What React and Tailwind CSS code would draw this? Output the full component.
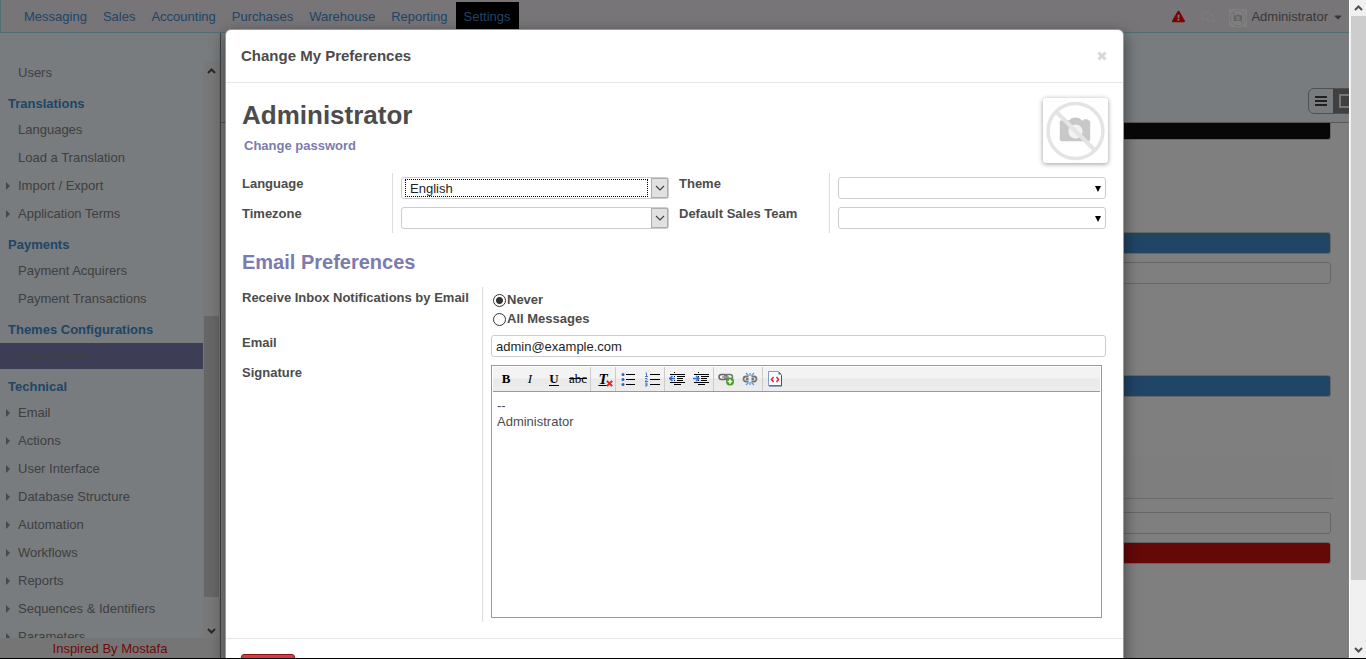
import React from "react";
import { FaExclamationTriangle, FaRegComments, FaCaretDown } from "react-icons/fa";

const navItems = ["Messaging", "Sales", "Accounting", "Purchases", "Warehouse", "Reporting", "Settings"];

const sections = [
  { title: null, items: [["Users", false]] },
  {
    title: "Translations",
    items: [["Languages", false], ["Load a Translation", false], ["Import / Export", true], ["Application Terms", true]],
  },
  { title: "Payments", items: [["Payment Acquirers", false], ["Payment Transactions", false]] },
  { title: "Themes Configurations", items: [["User Theme", false]] },
  {
    title: "Technical",
    items: [
      ["Email", true],
      ["Actions", true],
      ["User Interface", true],
      ["Database Structure", true],
      ["Automation", true],
      ["Workflows", true],
      ["Reports", true],
      ["Sequences & Identifiers", true],
      ["Parameters", true],
    ],
  },
];

function Arrow({ down }) {
  return (
    <svg viewBox="0 0 9 6" className="h-[6px] w-[9px] shrink-0">
      <path d={down ? "M1 1 L4.5 4.5 L8 1" : "M1 5 L4.5 1.5 L8 5"} fill="none" stroke="#505050" strokeWidth="2" />
    </svg>
  );
}

function NoPhoto({ className }) {
  return (
    <svg viewBox="0 0 64 64" className={className}>
      <circle cx="32" cy="32.500" r="27" fill="none" stroke="#e4e4e4" strokeWidth="3.500" />
      <path d="M19 22 h7 l2-2 q4-1.500 8 0 l2 2 h2 v-1 h4 v1 h1 q1.500 0 1.500 1.500 v17 q0 2-2 2 h-26 q-2 0-2-2 v-17 q0-1.500 2-1.500z" fill="#c8c8c8" />
      <circle cx="32" cy="33" r="7" fill="#f2f2f2" />
      <path d="M13.500 14 L51 51.500" stroke="#e4e4e4" strokeWidth="4" />
    </svg>
  );
}

function TopBar() {
  return (
    <header className="flex h-[33px] shrink-0 items-start justify-between border-b border-l border-[#a5dde6] bg-[#f0eaf2] pt-[2px] text-[13px]">
      <nav className="flex pl-[15px]">
        {navItems.map((n) => (
          <a key={n} href="#" className={`flex h-[27px] items-center px-2 pb-px pt-[3px] text-[#428bca] ${n === "Settings" ? "bg-black" : ""}`}>
            {n}
          </a>
        ))}
      </nav>
      <div className="flex h-[29px] items-center pr-[5px] text-[#707070]">
        <FaExclamationTriangle className="mr-4 size-[13px] text-[#ff0000]" />
        <FaRegComments className="mr-[14px] size-[14px] text-white opacity-60" />
        <span className="mr-[4px] mt-[2px] block size-[18px] bg-white">
          <NoPhoto className="size-[18px]" />
        </span>
        <a href="#" className="flex items-center gap-1">
          Administrator
          <FaCaretDown className="size-3" />
        </a>
      </div>
    </header>
  );
}

function Sidebar() {
  return (
    <aside className="flex w-[221px] shrink-0 flex-col border-r border-[#808080] bg-[#f0f8ff] text-[13px]">
      <div className="h-7 shrink-0" />
      <div className="flex min-h-0 flex-1">
        <div className="min-w-0 flex-1 overflow-hidden">
          <div className="-mt-[2px]">
            {sections.map((s) => (
              <section key={s.title ?? "top"}>
                {s.title && <h4 className="h-7 pl-2 pt-1 font-bold leading-6 text-[#428bca]">{s.title}</h4>}
                <ul>
                  {s.items.map(([label, more]) => (
                    <li key={label} className={`my-[2px] flex h-[26px] items-center first:mt-px ${label === "User Theme" ? "bg-[#7c7bad]" : ""}`}>
                      <span className="flex w-[18px] shrink-0 pl-[6px]">
                        {more && (
                          <svg viewBox="0 0 4 8" className="h-2 w-1">
                            <path d="M0 0 L4 4 L0 8z" fill="#909090" />
                          </svg>
                        )}
                      </span>
                      <a href="#" className="text-[#808080]">{label}</a>
                    </li>
                  ))}
                </ul>
              </section>
            ))}
          </div>
        </div>
        <div className="flex w-[17px] shrink-0 flex-col items-center bg-[#f0f0f0] pb-1 pt-[7px]">
          <Arrow />
          <div className="mt-[242px] w-[15px] flex-1 bg-[#cdcdcd]" />
          <div className="h-[31px]" />
          <Arrow down />
        </div>
      </div>
      <footer className="h-5 shrink-0 bg-[#ebebeb] text-center leading-[22px] text-[#dc1414]">Inspired By Mostafa</footer>
    </aside>
  );
}

function Content() {
  return (
    <main className="min-w-0 flex-1 bg-white">
      <div className="flex h-[90px] items-end justify-end overflow-hidden border-b border-[#b0b0b0] bg-[#f0f8ff] pb-2">
        <div className="-mr-[9px] flex h-[26px] overflow-hidden rounded-l-[6px] border border-[#a0a0a0]">
          <button aria-label="List view" className="flex w-6 items-center justify-center">
            <svg viewBox="0 0 12 10" className="h-[10px] w-3">
              <path d="M0 1h12M0 5h12M0 9h12" stroke="#404040" strokeWidth="2" />
            </svg>
          </button>
          <button aria-label="Form view" className="flex w-6 items-center justify-center border-l border-[#808080] bg-[#808080]">
            <svg viewBox="0 0 14 14" className="size-[14px]">
              <path d="M1 1h12v12H1z" fill="none" stroke="#f0f0f0" strokeWidth="2" />
            </svg>
          </button>
        </div>
      </div>
      <div className="mr-[18px] pl-4">
        <div className="h-[17px] rounded-b-[3px] border border-t-0 border-[#ccc] bg-[#0e0e0e]" />
        <div className="mt-[92px] h-[22px] rounded-[3px] border border-[#ccc] bg-[#428bca]" />
        <input aria-label="Header color" className="mt-2 block h-[22px] w-full rounded-[3px] border border-[#ccc]" />
        <div className="mt-[91px] h-[22px] rounded-[3px] border border-[#ccc] bg-[#428bca]" />
        <div className="-mr-[2px] mt-[59px] h-[43px] border-b border-[#d6d6d6] bg-[#fdfdfd]" />
        <input aria-label="Button color" className="mt-[13px] block h-[22px] w-full rounded-[3px] border border-[#ccc]" />
        <div className="mt-2 h-[22px] rounded-[3px] border border-[#ccc] bg-[#c81010]" />
      </div>
    </main>
  );
}

function NativeSelect({ id, value, focused }) {
  return (
    <div className="relative h-[22px]">
      <select id={id} className="block h-full w-full appearance-none rounded-[3px] border border-[#ccc] bg-white pl-2 pr-6 pt-px text-[13px] font-normal leading-[20px] text-[#1e1e1e] outline-none">
        <option>{value}</option>
      </select>
      {focused && <span className="pointer-events-none absolute bottom-[2px] left-1 right-[21px] top-[2px] border border-dotted border-black" />}
      <span className="pointer-events-none absolute bottom-px right-px top-px flex w-[17px] items-center justify-center border border-[#adadad] bg-[#e1e1e1]">
        <svg viewBox="0 0 10 6" className="h-[6px] w-[10px]">
          <path d="M1 1 L5 5 L9 1" fill="none" stroke="#404040" strokeWidth="1.100" />
        </svg>
      </span>
    </div>
  );
}

function ComboSelect({ id }) {
  return (
    <div className="relative h-[22px]">
      <select id={id} className="block h-full w-full appearance-none rounded-[3px] border border-[#ccc] bg-white text-[13px] font-normal outline-none">
        <option />
      </select>
      <svg viewBox="0 0 6 6" className="pointer-events-none absolute right-[5px] top-[9px] size-[6px]">
        <path d="M0 0h6L3 6z" fill="#000" />
      </svg>
    </div>
  );
}

function FieldPair({ rows }) {
  return (
    <div className="flex flex-1">
      <div className="flex w-[151px] shrink-0 flex-col border-r border-[#ddd]">
        {rows.map(([id, label]) => (
          <label key={id} htmlFor={id} className="h-[30px] pt-[2px] leading-[18px]">
            {label}
          </label>
        ))}
      </div>
      <div className="flex flex-1 flex-col gap-2 pl-2 pt-1">
        {rows.map(([id, , control]) => (
          <React.Fragment key={id}>{control}</React.Fragment>
        ))}
      </div>
    </div>
  );
}

function Tool({ label, sep, children }) {
  return (
    <button
      aria-label={label}
      className={`flex h-6 shrink-0 items-center justify-center font-['Liberation_Serif',serif] text-[13px] font-normal leading-[16px] text-black ${sep ? "w-[25px] border-r border-[#ccc]" : "w-6"}`}
    >
      {children}
    </button>
  );
}

function Icon({ children }) {
  return (
    <svg viewBox="0 0 16 16" className="size-4 shrink-0" fill="none">
      {children}
    </svg>
  );
}

function IndentIcon({ flip }) {
  return (
    <Icon>
      <path d="M1 3.500h4M6 3.500h10M8 5.500h8M8 7.500h6M8 9.500h6M1 11.500h4M6 11.500h10M6 13.500h6" stroke="#000" />
      <path d="M5.500 1v14" stroke="#000" strokeDasharray="1 1" />
      <path d={flip ? "M0 7.500h5M3 5l3 2.500L3 10" : "M6 7.500H1M3.500 5L0.500 7.500l3 2.500"} stroke="#2b6fd0" strokeWidth="1.500" />
    </Icon>
  );
}

function Toolbar() {
  return (
    <div className="m-px mb-0 flex h-[25px] border-b border-[#999] bg-[linear-gradient(to_bottom,#f3f3f3_45%,#e9e9e9_50%,#ededed)] pl-px">
      <Tool label="Bold"><b>B</b></Tool>
      <Tool label="Italic"><i>I</i></Tool>
      <Tool label="Underline"><span className="border-b border-black font-bold leading-[12px]">U</span></Tool>
      <Tool label="Strikethrough" sep><s>abc</s></Tool>
      <Tool label="Remove formatting" sep>
        <span className="relative text-[15px] font-bold italic underline">
          T
          <svg viewBox="0 0 8 8" className="absolute -right-[5px] bottom-0 size-[7px]">
            <path d="M1 1l6 6M7 1L1 7" stroke="#f02020" strokeWidth="2.400" />
          </svg>
        </span>
      </Tool>
      <Tool label="Bullets">
        <Icon>
          <path d="M6 3.500h9M6 8.500h9M6 13.500h9" stroke="#000" />
          <g fill="#2f62b8">
            <circle cx="3" cy="3.500" r="1.500" />
            <circle cx="3" cy="8.500" r="1.500" />
            <circle cx="3" cy="13.500" r="1.500" />
          </g>
        </Icon>
      </Tool>
      <Tool label="Numbering" sep>
        <Icon>
          <path d="M6 3.500h10M6 8.500h10M6 13.500h10" stroke="#000" />
          <path d="M1.500 2h1v3M1 5.500h3M1 7.500h2v1l-1.500 1.500M1 10.500h3M1 12h2v1.500H1.500M3 13.500v1.500H1" stroke="#4a78c0" />
        </Icon>
      </Tool>
      <Tool label="Outdent"><IndentIcon /></Tool>
      <Tool label="Indent" sep><IndentIcon flip /></Tool>
      <Tool label="Insert hyperlink">
        <Icon>
          <rect x="1" y="3.500" width="8" height="5" rx="2.500" stroke="#666" strokeWidth="1.500" />
          <rect x="6.500" y="3.500" width="8" height="5" rx="2.500" stroke="#777" strokeWidth="1.500" />
          <path d="M4 6h7" stroke="#999" strokeWidth="1.500" />
          <circle cx="12" cy="10.500" r="4" fill="#4c9a2a" />
          <path d="M12 8.200v4.600M9.700 10.500h4.600" stroke="#fff" strokeWidth="1.500" />
        </Icon>
      </Tool>
      <Tool label="Remove hyperlink" sep>
        <Icon>
          <path d="M6.500 5.500H4a2.500 2.500 0 0 0 0 5h2.500M9.500 5.500H12a2.500 2.500 0 0 1 0 5H9.500M4 8h2.500M9.500 8H12" stroke="#777" strokeWidth="1.800" />
          <path d="M8 2v3M4 2l2.500 2.500M12 2L9.500 4.500M8 14v-3M4 14l2.500-2.500M12 14l-2.500-2.500" stroke="#5b9be6" strokeWidth="1.300" />
        </Icon>
      </Tool>
      <Tool label="Show source">
        <Icon>
          <path d="M1.500 0.500h10l3 3v11h-13z" fill="#f8fbff" stroke="#7f9cc8" />
          <path d="M14.500 4.500v10.500H2" stroke="#2f5590" />
          <path d="M11.500 0.500v3h3z" fill="#3d66a5" />
          <path d="M6.500 6L4.500 8.500l2 2.500M9.500 6l2 2.500-2 2.500" stroke="#f02020" strokeWidth="1.500" />
        </Icon>
      </Tool>
    </div>
  );
}

function Preferences() {
  return (
    <div role="dialog" aria-label="Change My Preferences" className="mt-[29px] w-full max-w-[899px] self-start rounded-[6px] border border-[#999] bg-white text-[13px] font-bold text-[#4c4c4c] shadow-[0_5px_15px_rgba(0,0,0,0.5)]">
      <div className="flex h-[53px] items-center justify-between border-b border-[#e5e5e5] pl-[15px] pr-[15px]">
        <h3 className="text-[15px] leading-5">Change My Preferences</h3>
        <button aria-label="Close" className="flex size-3 items-center justify-center">
          <svg viewBox="0 0 10 10" className="size-[10px]">
            <path d="M1.500 1.500l7 7M8.500 1.500l-7 7" stroke="#d8d8d8" strokeWidth="3" />
          </svg>
        </button>
      </div>
      <div className="pb-4 pl-4 pr-[15px] pt-[15px]">
        <div className="flex items-start justify-between">
          <div>
            <h1 className="text-[26px] leading-[34px]">Administrator</h1>
            <button className="mt-[5px] block pl-[2px] leading-[18px] text-[#7c7bad]">Change password</button>
          </div>
          <div className="size-[65px] rounded-[3px] bg-white shadow-[0_1px_5px_rgba(0,0,0,0.4)]">
            <NoPhoto className="size-[65px]" />
          </div>
        </div>
        <div className="mr-[2px] mt-[10px] flex gap-[10px]">
          <FieldPair
            rows={[
              ["lang", "Language", <NativeSelect id="lang" value="English" focused />],
              ["tz", "Timezone", <NativeSelect id="tz" value="" />],
            ]}
          />
          <FieldPair
            rows={[
              ["theme", "Theme", <ComboSelect id="theme" />],
              ["team", "Default Sales Team", <ComboSelect id="team" />],
            ]}
          />
        </div>
        <h2 className="mt-[17px] text-[20px] leading-6 text-[#7c7bad]">Email Preferences</h2>
        <div className="mr-[2px] mt-[13px] flex">
          <div className="flex w-[241px] shrink-0 flex-col border-r border-[#ddd] pt-[2px] leading-[18px]">
            <span id="notify" className="h-[45px]">Receive Inbox Notifications by Email</span>
            <label htmlFor="email" className="h-[30px]">Email</label>
            <label htmlFor="signature">Signature</label>
          </div>
          <div className="min-w-0 flex-1 pb-1 pl-2">
            <div role="radiogroup" aria-labelledby="notify" className="pl-[2px] pt-[3px] leading-[19px]">
              {["Never", "All Messages"].map((o, i) => (
                <label key={o} className="flex h-[19px] items-center gap-px">
                  <input
                    type="radio"
                    name="notify"
                    defaultChecked={i === 0}
                    className="mt-[2px] size-[13px] appearance-none rounded-full border border-[#333] bg-white checked:bg-[radial-gradient(circle,#333_3px,#fff_4px)]"
                  />
                  {o}
                </label>
              ))}
            </div>
            <input id="email" type="email" defaultValue="admin@example.com" className="mt-[7px] block h-[22px] w-full rounded-[3px] border border-[#ccc] px-1 font-normal text-[#1e1e1e]" />
            <div className="mr-1 mt-2 border border-[#999]">
              <Toolbar />
              <textarea
                id="signature"
                defaultValue={"--\nAdministrator"}
                className="block h-[225px] w-full resize-none px-[5px] pt-[6px] font-normal leading-4 text-[#4c4c4c] outline-none"
              />
            </div>
          </div>
        </div>
      </div>
      <div className="border-t border-[#e5e5e5] px-[15px] pb-[15px] pt-[15px]">
        <button className="h-[26px] w-[54px] rounded-[3px] border border-[#8a1414] bg-[linear-gradient(to_bottom,#df3f3f,#a21a1a)] text-white">Save</button>
      </div>
    </div>
  );
}

export default function App() {
  return (
    <div className="flex h-screen overflow-hidden border-b border-black font-['Liberation_Sans',Arial,sans-serif]">
      <div className="relative flex min-w-0 flex-1 flex-col overflow-hidden">
        <TopBar />
        <div className="flex min-h-0 flex-1">
          <Sidebar />
          <Content />
        </div>
        <div className="absolute inset-0 flex justify-center overflow-hidden bg-black/50">
          <Preferences />
        </div>
      </div>
      <div className="flex w-[17px] shrink-0 flex-col items-center border-l border-white bg-[#f0f0f0] pb-[5px] pt-[5px]">
        <Arrow />
        <div className="mt-[5px] w-[15px] flex-1 bg-[#cdcdcd]" />
        <div className="h-[67px]" />
        <Arrow down />
      </div>
    </div>
  );
}
